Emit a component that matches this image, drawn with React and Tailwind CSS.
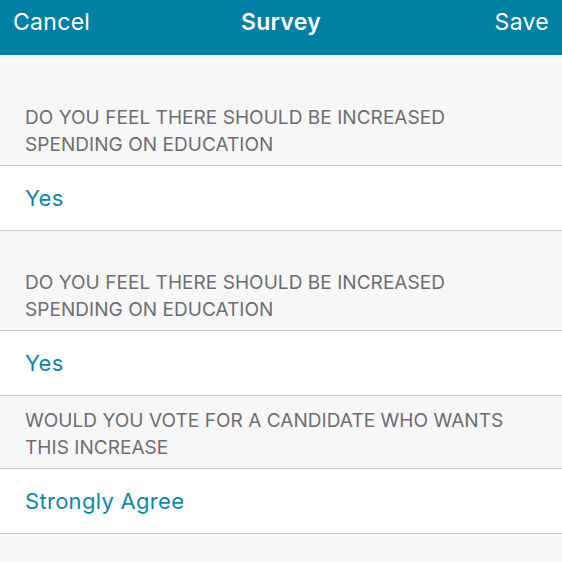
export default function App() {
  const font = { fontFamily: 'Inter, "Noto Sans", sans-serif' };
  const Header = ({ lines, pt }) => (
    <div className={`px-[25px] pb-[7px] ${pt} text-[19px] leading-[27px] text-[#6d6d72] uppercase tracking-[0.05px]`}>
      {lines.map((l, i) => (
        <div key={i}>{l}</div>
      ))}
    </div>
  );
  const Row = ({ children }) => (
    <div className="h-[66px] bg-white border-t border-b border-[#c8c7cc] flex items-center px-[25px] text-[22px] tracking-[0.3px] text-[#0e86a8]">
      {children}
    </div>
  );
  return (
    <div className="w-[562px] h-[562px] bg-[#f7f7f7] overflow-hidden" style={font}>
      <div className="h-[55px] bg-[#0080a4] flex items-center px-[13px] text-white text-[23px] pb-[10px]">
        <span className="flex-1 tracking-[0.3px]">Cancel</span>
        <span className="font-semibold tracking-[0.3px]">Survey</span>
        <span className="flex-1 text-right tracking-[0.3px]">Save</span>
      </div>
      <Header pt="pt-[49px]" lines={["Do you feel there should be increased", "spending on education"]} />
      <Row>Yes</Row>
      <Header pt="pt-[38px]" lines={["Do you feel there should be increased", "spending on education"]} />
      <Row>Yes</Row>
      <Header pt="pt-[11px]" lines={["Would you vote for a candidate who wants", "this increase"]} />
      <Row>Strongly Agree</Row>
    </div>
  );
}
